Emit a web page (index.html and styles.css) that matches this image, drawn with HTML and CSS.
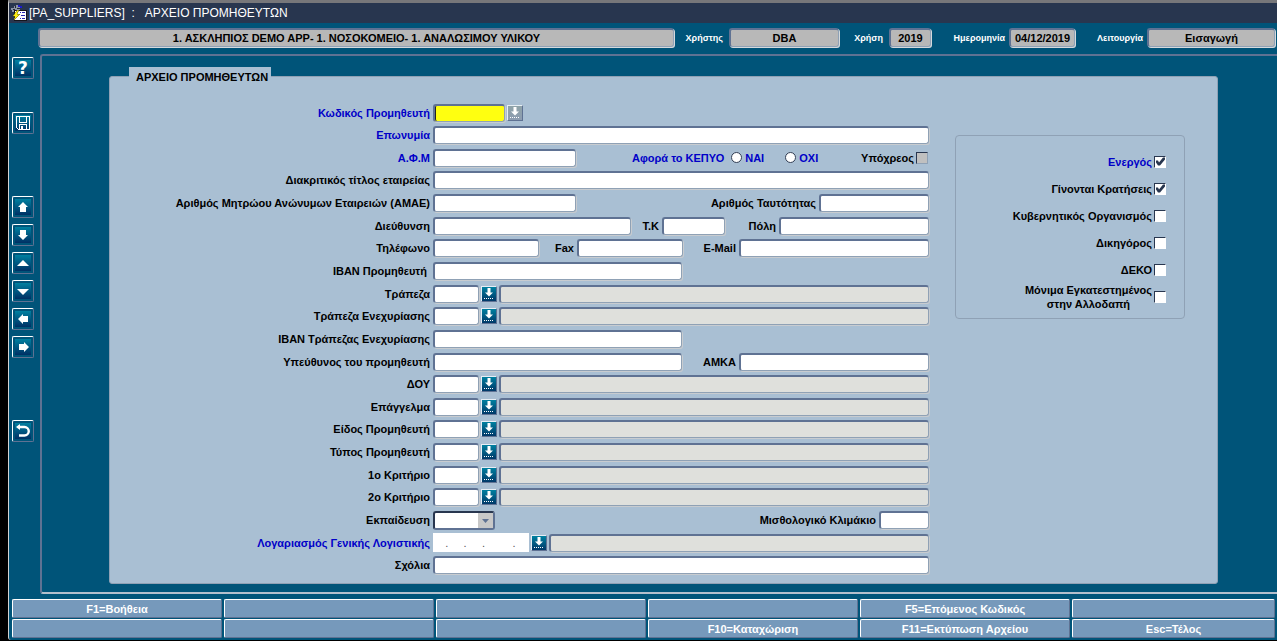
FILE: index.html
```html
<!DOCTYPE html>
<html lang="el">
<head>
<meta charset="utf-8">
<title>ΑΡΧΕΙΟ ΠΡΟΜΗΘΕΥΤΩΝ</title>
<link rel="stylesheet" href="styles.css">
</head>
<body>
<svg class="defs" width="0" height="0" aria-hidden="true">
  <symbol id="lov" viewBox="0 0 14 14"><path d="M5.500 1h3v4.500H11L7 9.500 3 5.500h2.500z" fill="currentColor"/><path d="M2 11.500h10" stroke="currentColor" stroke-dasharray="1 1"/></symbol>
</svg>
<div class="window">
  <header class="titlebar">
    <svg class="app-icon" width="16" height="16" viewBox="0 0 16 16" shape-rendering="crispEdges">
      <path d="M1 3h2V1h2V0h3v1h2v2H9v3H7v2H5v1H3V7H1V5H0V3z" fill="#8a93a5"/>
      <path d="M4 1h1v2H4zM2 4h2v1H2zM6 3h3v1H6z" fill="#20283a"/>
      <path d="M7 0h2v2H7zM9 1h2v2H9z" fill="#1a1ad0"/>
      <path d="M3.500 5.500h12v10h-12z" fill="#fff" stroke="#15151c"/>
      <path d="M9 7h1v1H9zM11 7h3v1h-3zM10 10h4v1h-4zM9 13h1v1H9zM11 13h3v1h-3z" fill="#2525b0"/>
      <path d="M6 5h2L6 9h3l-6 6 1-4H2z" fill="#ffee10" stroke="#55551c" stroke-width=".5"/>
    </svg>
    <h1 class="title">[PA_SUPPLIERS]&nbsp; :&nbsp; &nbsp;ΑΡΧΕΙΟ ΠΡΟΜΗΘΕΥΤΩΝ</h1>
  </header>

  <section class="status">
    <output class="plate plate-org">1. ΑΣΚΛΗΠΙΟΣ DEMO APP- 1. ΝΟΣΟΚΟΜΕΙΟ- 1. ΑΝΑΛΩΣΙΜΟΥ ΥΛΙΚΟΥ</output>
    <label class="status-label" for="user">Χρήστης</label><output class="plate plate-user" id="user">DBA</output>
    <label class="status-label" for="year">Χρήση</label><output class="plate plate-year" id="year">2019</output>
    <label class="status-label label-date" for="date">Ημερομηνία</label><output class="plate plate-date" id="date">04/12/2019</output>
    <label class="status-label label-mode" for="mode">Λειτουργία</label><output class="plate plate-mode" id="mode">Εισαγωγή</output>
  </section>

  <div class="body">
    <nav class="toolbar">
      <button class="tool" aria-label="Βοήθεια"><span class="question">?</span></button>
      <button class="tool group-save" aria-label="Αποθήκευση"><svg width="16" height="16" viewBox="0 0 16 16" shape-rendering="crispEdges"><path fill="#fff" fill-rule="evenodd" d="M1 1h14v14H3l-2-2zM2 2v11l1 1h1V9h8v5h2V2h-2v6H4V2zM5 2v5h6V2zM5 10v4h6v-4z"/><path fill="#fff" d="M6 11h2v3H6z"/></svg></button>
      <button class="tool group-nav" aria-label="Πρώτο"><svg width="16" height="16" viewBox="0 0 16 16"><path d="M8 3l5 5h-2v5H5V8H3z" fill="#fff"/></svg></button>
      <button class="tool" aria-label="Τελευταίο"><svg width="16" height="16" viewBox="0 0 16 16"><path d="M8 13L3 8h2V3h6v5h2z" fill="#fff"/></svg></button>
      <button class="tool" aria-label="Προηγούμενο"><svg width="16" height="16" viewBox="0 0 16 16"><path d="M8 5l6 6H2z" fill="#fff"/></svg></button>
      <button class="tool" aria-label="Επόμενο"><svg width="16" height="16" viewBox="0 0 16 16"><path d="M2 6h12l-6 6z" fill="#fff"/></svg></button>
      <button class="tool" aria-label="Πίσω"><svg width="16" height="16" viewBox="0 0 16 16"><path d="M3 8l5-5v2h5v6H8v2z" fill="#fff"/></svg></button>
      <button class="tool" aria-label="Εμπρός"><svg width="16" height="16" viewBox="0 0 16 16"><path d="M14 8L9 3v2H4v6h5v2z" fill="#fff"/></svg></button>
      <button class="tool group-nav" aria-label="Επιστροφή"><svg width="16" height="16" viewBox="0 0 16 16"><path d="M3 4h6.500a4 4 0 0 1 0 8.500H4" fill="none" stroke="#fff" stroke-width="2.400"/><path d="M1 4l4-3v6z" fill="#fff"/></svg></button>
    </nav>

    <main class="workspace">
      <div class="panel">
        <h2 class="tab">ΑΡΧΕΙΟ ΠΡΟΜΗΘΕΥΤΩΝ</h2>
        <form class="form">
          <div class="row"><label class="name key" for="code">Κωδικός Προμηθευτή</label><div class="fields"><input class="w-code active" id="code"><button type="button" class="lov lov-off" aria-label="Λίστα"><svg><use href="#lov"/></svg></button></div></div>
          <div class="row"><label class="name key" for="lname">Επωνυμία</label><div class="fields"><input class="grow" id="lname"></div></div>
          <div class="row"><label class="name key" for="afm">Α.Φ.Μ</label><div class="fields"><input class="w-id" id="afm">
            <div class="kepyo" role="radiogroup" aria-labelledby="kepyo"><span id="kepyo">Αφορά το ΚΕΠΥΟ</span><label class="choice"><input type="radio" name="kepyo">ΝΑΙ</label><label class="choice"><input type="radio" name="kepyo">ΟΧΙ</label></div>
            <label class="liable">Υπόχρεος<input type="checkbox" class="check muted"></label></div></div>
          <div class="row"><label class="name" for="dtitle">Διακριτικός τίτλος εταιρείας</label><div class="fields"><input class="grow" id="dtitle"></div></div>
          <div class="row"><label class="name" for="amae">Αριθμός Μητρώου Ανώνυμων Εταιρειών (ΑΜΑΕ)</label><div class="fields"><input class="w-id" id="amae"><label class="inner" for="idno">Αριθμός Ταυτότητας</label><input class="w-idno" id="idno"></div></div>
          <div class="row"><label class="name" for="addr">Διεύθυνση</label><div class="fields"><input class="w-addr" id="addr"><label class="inner beside" for="zip">Τ.Κ</label><input class="w-zip" id="zip"><label class="inner" for="city">Πόλη</label><input class="w-city" id="city"></div></div>
          <div class="row"><label class="name" for="tel">Τηλέφωνο</label><div class="fields"><input class="w-tel" id="tel"><label class="inner beside wide" for="fax">Fax</label><input class="w-tel" id="fax"><label class="inner" for="mail">E-Mail</label><input class="w-half" id="mail"></div></div>
          <div class="row"><label class="name" for="iban">ΙΒΑΝ Προμηθευτή&nbsp;</label><div class="fields"><input class="w-iban" id="iban"></div></div>
          <div class="row"><label class="name" for="bank">Τράπεζα</label><div class="fields"><input class="w-key" id="bank"><button type="button" class="lov" aria-label="Λίστα"><svg><use href="#lov"/></svg></button><input class="grow off" disabled aria-label="Τράπεζα"></div></div>
          <div class="row"><label class="name" for="pbank">Τράπεζα Ενεχυρίασης</label><div class="fields"><input class="w-key" id="pbank"><button type="button" class="lov" aria-label="Λίστα"><svg><use href="#lov"/></svg></button><input class="grow off" disabled aria-label="Τράπεζα Ενεχυρίασης"></div></div>
          <div class="row"><label class="name" for="piban">ΙΒΑΝ Τράπεζας Ενεχυρίασης</label><div class="fields"><input class="w-iban" id="piban"></div></div>
          <div class="row"><label class="name" for="resp">Υπεύθυνος του προμηθευτή</label><div class="fields"><input class="w-iban" id="resp"><label class="inner" for="amka">ΑΜΚΑ</label><input class="w-half" id="amka"></div></div>
          <div class="row"><label class="name" for="doy">ΔΟΥ</label><div class="fields"><input class="w-key" id="doy"><button type="button" class="lov" aria-label="Λίστα"><svg><use href="#lov"/></svg></button><input class="grow off" disabled aria-label="ΔΟΥ"></div></div>
          <div class="row"><label class="name" for="prof">Επάγγελμα</label><div class="fields"><input class="w-key" id="prof"><button type="button" class="lov" aria-label="Λίστα"><svg><use href="#lov"/></svg></button><input class="grow off" disabled aria-label="Επάγγελμα"></div></div>
          <div class="row"><label class="name" for="kind">Είδος Προμηθευτή</label><div class="fields"><input class="w-key" id="kind"><button type="button" class="lov" aria-label="Λίστα"><svg><use href="#lov"/></svg></button><input class="grow off" disabled aria-label="Είδος Προμηθευτή"></div></div>
          <div class="row"><label class="name" for="type">Τύπος Προμηθευτή</label><div class="fields"><input class="w-key" id="type"><button type="button" class="lov" aria-label="Λίστα"><svg><use href="#lov"/></svg></button><input class="grow off" disabled aria-label="Τύπος Προμηθευτή"></div></div>
          <div class="row"><label class="name" for="crit1">1ο Κριτήριο</label><div class="fields"><input class="w-key" id="crit1"><button type="button" class="lov" aria-label="Λίστα"><svg><use href="#lov"/></svg></button><input class="grow off" disabled aria-label="1ο Κριτήριο"></div></div>
          <div class="row"><label class="name" for="crit2">2ο Κριτήριο</label><div class="fields"><input class="w-key" id="crit2"><button type="button" class="lov" aria-label="Λίστα"><svg><use href="#lov"/></svg></button><input class="grow off" disabled aria-label="2ο Κριτήριο"></div></div>
          <div class="row"><label class="name" for="edu">Εκπαίδευση</label><div class="fields"><span class="select-box"><select id="edu"><option></option></select><svg class="caret" width="15" height="15" viewBox="0 0 15 15"><path d="M0 0h15v15H0z" fill="#c8c8c8"/><path d="M4 6h7l-3.500 4z" fill="#5f7293"/></svg></span><label class="inner" for="scale">Μισθολογικό Κλιμάκιο</label><input class="w-scale" id="scale"></div></div>
          <div class="row"><label class="name key" for="ledger">Λογαριασμός Γενικής Λογιστικής</label><div class="fields"><input class="ledger" id="ledger" value="    .     .     .         ."><button type="button" class="lov" aria-label="Λίστα"><svg><use href="#lov"/></svg></button><input class="grow off" disabled aria-label="Λογαριασμός"></div></div>
          <div class="row"><label class="name" for="notes">Σχόλια</label><div class="fields"><input class="grow" id="notes"></div></div>
        </form>

        <fieldset class="options">
          <label class="option key">Ενεργός<input type="checkbox" class="check" checked></label>
          <label class="option">Γίνονται Κρατήσεις<input type="checkbox" class="check" checked></label>
          <label class="option">Κυβερνητικός Οργανισμός<input type="checkbox" class="check"></label>
          <label class="option">Δικηγόρος<input type="checkbox" class="check"></label>
          <label class="option">ΔΕΚΟ<input type="checkbox" class="check"></label>
          <label class="option"><span class="two-line">Μόνιμα Εγκατεστημένος<br>στην Αλλοδαπή</span><input type="checkbox" class="check"></label>
        </fieldset>
      </div>
    </main>
  </div>

  <footer class="keys">
    <button>F1=Βοήθεια</button><button></button><button></button><button></button><button>F5=Επόμενος Κωδικός</button><button></button>
    <button></button><button></button><button></button><button>F10=Καταχώριση</button><button>F11=Εκτύπωση Αρχείου</button><button>Esc=Τέλος</button>
  </footer>
</div>
</body>
</html>
```
FILE: styles.css
```css
:root {
  --teal: #005479;
  --edge: #5f7293;
  --soft: #8fa1b5;
  --panel: #a9bfd3;
  --pale: #c8ccd0;
}
* { box-sizing: border-box; }
body {
  margin: 0;
  background: #000;
  font: bold 11px/14px "Liberation Sans", Arial, sans-serif;
  color: #000;
}
.defs { position: absolute; }
button, input, select { font: inherit; margin: 0; padding: 0; }

.window {
  display: flex;
  flex-direction: column;
  min-height: calc(100vh - 1px);
  margin-bottom: 1px;
  margin-left: 8px;
  background: var(--teal);
  border-left: 1px solid #d4d4d4;
  border-top: 3px solid #77777a;
  border-bottom-left-radius: 3px;
}
.titlebar {
  display: flex;
  align-items: center;
  gap: 2px;
  height: 20px;
  padding-left: 2px;
  background: #28364f;
  color: #fff;
}
.title { margin: 0; font-size: 12px; font-weight: normal; white-space: pre; }

.status {
  display: flex;
  align-items: center;
  padding: 5px 2px 7px 29px;
}
.plate {
  height: 19px;
  background: #b8b8b8;
  border: 1px solid var(--soft);
  border-top: 2px solid var(--edge);
  border-left: 2px solid var(--edge);
  border-radius: 3px;
  box-shadow: 1px 1px 0 #d5d9dc;
  line-height: 16px;
  text-align: center;
  white-space: nowrap;
}
.plate-org { flex: 1; }
.plate-user { width: 110px; }
.plate-year { width: 42px; }
.plate-date { width: 66px; }
.plate-mode { width: 128px; }
.status-label {
  width: 55px;
  padding-right: 6px;
  color: #fff;
  font-size: 9px;
  text-align: right;
}
.plate-user + .status-label { width: 50px; }
.status-label.label-date { width: 78px; padding-right: 4px; }
.status-label.label-mode { width: 72px; padding-right: 4px; }

.body { display: flex; flex: 1; }
.toolbar {
  display: flex;
  flex-direction: column;
  gap: 6px;
  width: 31px;
  padding: 3px 0 0 3px;
}
.tool {
  display: grid;
  place-items: center;
  width: 22px;
  height: 22px;
  border: 1px solid #fff;
  border-right-color: var(--edge);
  border-bottom-color: var(--edge);
  border-radius: 2px;
  background: linear-gradient(#0080a0, #003064) 2px 2px / 16px 16px no-repeat, var(--teal);
}
.question { color: #fff; font: bold 17px/18px "DejaVu Sans", sans-serif; }
.group-save { margin-top: 27px; }
.group-nav { margin-top: 56px; }

.workspace {
  display: flex;
  flex: 1;
  padding: 20px 59px 8px 67px;
  border: 2px solid var(--edge);
  border-right: 0;
  border-bottom-color: #b4bfcc;
  border-radius: 3px 0 0 3px;
}
.panel {
  position: relative;
  display: flex;
  align-items: flex-start;
  gap: 26px;
  flex: 1;
  padding: 26px 32px 8px 0;
  background: var(--panel);
  border: 1px solid var(--soft);
  border-radius: 3px;
}
.tab {
  position: absolute;
  top: -10px;
  left: 19px;
  margin: 0;
  padding: 3px 3px 0 7px;
  background: var(--panel);
  font-size: 11px;
}
.form {
  display: flex;
  flex: 1;
  flex-direction: column;
  align-self: stretch;
  justify-content: space-between;
}
.row { display: flex; align-items: center; height: 19px; }
.name { width: 323px; padding-right: 3px; text-align: right; white-space: nowrap; }
.key, .kepyo { color: #0000c8; }
.fields { display: flex; flex: 1; align-items: center; min-width: 0; }
.fields input:not([type]) {
  height: 18px;
  min-width: 0;
  border: 1px solid var(--soft);
  border-top: 2px solid var(--edge);
  border-left: 2px solid var(--edge);
  border-radius: 3px;
  box-shadow: 1px 1px 0 var(--pale);
  background: #fff;
}
.fields input.off { background: #dfe0dc; }
.fields input.active { background: #ffff10; box-shadow: inset 1px 0 0 #222, 1px 1px 0 var(--pale); }
.fields input.ledger { width: 96px; height: 19px; border: 0; border-radius: 0; box-shadow: none; color: #555; font-weight: normal; }
.grow { flex: 1; }
.w-code { width: 72px; }
.w-id { width: 143px; }
.w-idno { width: 110px; }
.w-addr { width: 198px; }
.w-zip { width: 63px; }
.w-city { width: 150px; }
.w-tel { width: 106px; }
.w-half { width: 190px; }
.w-iban { width: 249px; }
.w-key { width: 46px; }
.w-scale { width: 50px; }
.inner { margin-left: auto; padding-right: 3px; white-space: nowrap; }
.inner.beside { width: 31px; margin-left: 0; text-align: right; }
.inner.wide { width: 38px; }

.lov {
  display: grid;
  place-items: center;
  width: 16px;
  height: 16px;
  margin: 0 2px;
  border: 1px solid #e6eef5;
  border-right-color: var(--edge);
  border-bottom-color: var(--edge);
  background: linear-gradient(#0080a0, #003868);
  color: #fff;
}
.lov svg { width: 14px; height: 14px; }
.lov-off { background: linear-gradient(#8fa3a8, #8c9cb0); }

.kepyo { display: flex; align-items: center; margin-left: 56px; white-space: nowrap; }
.choice { display: flex; align-items: center; gap: 3px; width: 47px; margin-left: 7px; }
.choice input {
  appearance: none;
  width: 11px;
  height: 11px;
  border: 1px solid #333f55;
  border-radius: 50%;
  background: #fff;
}
.liable { display: flex; align-items: center; gap: 2px; margin-left: auto; padding-right: 1px; }
.check {
  appearance: none;
  width: 12px;
  height: 12px;
  flex: none;
  border: 1px solid #fff;
  border-top-color: #28364f;
  border-left-color: #28364f;
  background: #fff;
}
.check.muted { background: #c0c0c0; border-color: #28364f #8fa1b5 #8fa1b5 #28364f; }
.check:checked::after {
  content: "";
  display: block;
  width: 10px;
  height: 10px;
  background: #28364f;
  clip-path: polygon(10% 40%, 30% 40%, 40% 60%, 80% 10%, 100% 10%, 100% 30%, 50% 90%, 30% 90%, 10% 60%);
}
.select-box { position: relative; width: 62px; height: 19px; }
.select-box select {
  appearance: none;
  width: 100%;
  height: 100%;
  border: 2px solid var(--edge);
  border-top-color: #28364f;
  border-left-color: #28364f;
  border-radius: 3px;
  background: #fff;
}
.caret { position: absolute; top: 2px; right: 2px; pointer-events: none; }

.options {
  display: flex;
  flex-direction: column;
  width: 230px;
  margin: 32px 0 0;
  padding: 12px 18px 8px 0;
  border: 1px solid var(--soft);
  border-radius: 4px;
}
.option {
  display: flex;
  align-items: center;
  justify-content: flex-end;
  gap: 2px;
  height: 27px;
}
.two-line { text-align: center; }

.keys {
  display: grid;
  grid-template-columns: repeat(5, 210fr) 203fr;
  gap: 1px 2px;
  padding: 5px 2px 2px 3px;
}
.keys button {
  height: 19px;
  border: 1px solid #fff;
  border-right-color: var(--edge);
  border-bottom-color: var(--edge);
  border-radius: 2px;
  background: #7699bb;
  color: #fff;
}
```
